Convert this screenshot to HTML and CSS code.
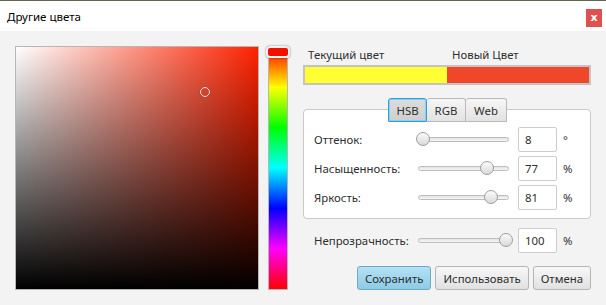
FILE: index.html
```html
<!DOCTYPE html>
<html lang="ru">
<head>
    <meta charset="UTF-8">
    <title>Другие цвета</title>
    <link rel="stylesheet" href="styles.css">
</head>
<body>
    <div class="window">
        <div class="titlebar">
            <span class="title">Другие цвета</span>
            <span class="close">x</span>
        </div>
        <div class="content">
            <div class="sv-area">
                <div class="sv-handle" style="left: 184px; top: 40px;"></div>
            </div>
            <div class="hue-bar">
                <div class="hue-handle"></div>
            </div>
            <div class="side">
                <div class="swatch-labels">
                    <span>Текущий цвет</span>
                    <span>Новый Цвет</span>
                </div>
                <div class="swatch">
                    <div class="swatch-old"></div>
                    <div class="swatch-new"></div>
                </div>
                <div class="tabs">
                    <span class="tab selected">HSB</span>
                    <span class="tab">RGB</span>
                    <span class="tab">Web</span>
                </div>
                <div class="panel">
                    <div class="row">
                        <span class="row-label">Оттенок:</span>
                        <div class="slider"><div class="track"></div><div class="thumb" style="left: -2px;"></div></div>
                        <input class="value" type="text" value="8">
                        <span class="unit">°</span>
                    </div>
                    <div class="row">
                        <span class="row-label">Насыщенность:</span>
                        <div class="slider"><div class="track"></div><div class="thumb" style="left: 62px;"></div></div>
                        <input class="value" type="text" value="77">
                        <span class="unit">%</span>
                    </div>
                    <div class="row">
                        <span class="row-label">Яркость:</span>
                        <div class="slider"><div class="track"></div><div class="thumb" style="left: 66px;"></div></div>
                        <input class="value" type="text" value="81">
                        <span class="unit">%</span>
                    </div>
                </div>
                <div class="row opacity-row">
                    <span class="row-label">Непрозрачность:</span>
                    <div class="slider"><div class="track"></div><div class="thumb" style="left: 81px;"></div></div>
                    <input class="value" type="text" value="100">
                    <span class="unit">%</span>
                </div>
                <div class="buttons">
                    <button class="btn primary">Сохранить</button>
                    <button class="btn">Использовать</button>
                    <button class="btn">Отмена</button>
                </div>
            </div>
        </div>
    </div>
</body>
</html>
```

FILE: styles.css
```css
body {
    margin: 0;
    font-family: 'Noto Sans', 'Open Sans', sans-serif;
    font-size: 11.4px;
    color: #2e2e2e;
    background-color: #f3f3f3;
}
.window {
    width: 606px;
    height: 305px;
    background-color: #f3f3f3;
}
.titlebar {
    background: white;
    border-top: 1px solid #66644e;
    display: flex;
    align-items: center;
    justify-content: space-between;
    box-sizing: border-box;
    height: 31px;
}
.title {
    margin-left: 7px;
    color: #000;
    font-size: 11.5px;
}
.close {
    width: 16px;
    height: 18px;
    margin-right: 4px;
    margin-top: 3px;
    background-color: #e05050;
    color: white;
    font-weight: bold;
    font-size: 11px;
    font-family: 'DejaVu Sans', sans-serif;
    display: flex;
    align-items: center;
    justify-content: center;
    line-height: 1;
}
.content {
    display: flex;
    padding: 15px 15px 0 15px;
}
.sv-area {
    position: relative;
    width: 244px;
    height: 244px;
    box-sizing: border-box;
    border: 1px solid #b6b6b6;
    background:
        linear-gradient(to top, #000, rgba(0, 0, 0, 0)),
        linear-gradient(to right, #fff, #ff2200);
}
.sv-handle {
    position: absolute;
    width: 8px;
    height: 8px;
    border-radius: 50%;
    border: 1.5px solid #f0e6e4;
    box-shadow: 0 0 1px rgba(0, 0, 0, 0.6);
}
.hue-bar {
    position: relative;
    width: 20px;
    height: 244px;
    margin-left: 9px;
    box-sizing: border-box;
    border: 1px solid #b6b6b6;
    background: linear-gradient(to bottom, #ff0000 0%, #ffff00 16.7%, #00ff00 33.3%, #00ffff 50%, #0000ff 66.7%, #ff00ff 83.3%, #ff0000 100%);
}
.hue-handle {
    position: absolute;
    left: -3px;
    top: -1px;
    width: 20px;
    height: 8px;
    border: 2px solid #f2f2f2;
    border-radius: 4px;
    background: #f21100;
    box-shadow: 0 0 2px rgba(0, 0, 0, 0.5);
}
.side {
    width: 288px;
    margin-left: 15px;
    display: flex;
    flex-direction: column;
}
.swatch-labels {
    display: grid;
    grid-template-columns: 1fr 1fr;
    height: 19px;
    line-height: 17px;
}
.swatch-labels span {
    padding-left: 5px;
}
.swatch {
    display: flex;
    height: 20px;
    box-sizing: border-box;
    border: 2px solid #c3c3c3;
}
.swatch-old {
    flex: 1;
    background-color: #ffff33;
}
.swatch-new {
    flex: 1;
    background-color: #f0472a;
}
.tabs {
    display: flex;
    justify-content: center;
    margin-top: 13px;
    margin-bottom: -13px;
    position: relative;
    z-index: 1;
    padding-left: 1px;
}
.tab {
    height: 24px;
    box-sizing: border-box;
    padding: 0 6px;
    width: 39px;
    display: flex;
    align-items: center;
    justify-content: center;
    border: 1px solid #b9b9b9;
    border-left: none;
    background: linear-gradient(#f6f6f6, #e2e2e2);
    border-radius: 3px 3px 0 0;
}
.tab:first-child {
    border-left: 1px solid #b9b9b9;
}
.tab:last-child {
    width: 41px;
}
.tab.selected {
    background: linear-gradient(#dcdcdc, #cfcfcf);
    border: 1px solid #2a9fd9;
    box-shadow: inset 0 0 0 1px #8fcdec;
}
.panel {
    background: white;
    border: 1px solid #cacaca;
    border-radius: 4px;
    padding: 17px 0 8px 10px;
    display: flex;
    flex-direction: column;
    gap: 4px;
}
.row {
    display: flex;
    align-items: center;
    height: 25px;
}
.row-label {
    width: 104px;
}
.slider {
    position: relative;
    width: 91px;
    height: 14px;
    margin-right: 9px;
}
.track {
    position: absolute;
    left: 0;
    right: 0;
    top: 4px;
    height: 5px;
    box-sizing: border-box;
    border: 1px solid #bdbdbd;
    border-radius: 3px;
    background: linear-gradient(#e2e2e2, #f7f7f7);
}
.thumb {
    position: absolute;
    top: -1px;
    width: 14px;
    height: 14px;
    box-sizing: border-box;
    border: 1px solid #9e9e9e;
    border-radius: 50%;
    background: linear-gradient(#fbfbfb, #d9d9d9);
}
.value {
    width: 39px;
    height: 25px;
    box-sizing: border-box;
    border: 1px solid #cdcdcd;
    border-radius: 2px;
    padding: 0 6px;
    font-family: inherit;
    font-size: 11.4px;
    color: #2e2e2e;
    background: white;
    outline: none;
}
.unit {
    margin-left: 6px;
}
.opacity-row {
    margin-top: 9px;
    padding-left: 11px;
}
.buttons {
    display: flex;
    justify-content: flex-end;
    gap: 4px;
    margin-top: 13px;
}
.btn {
    height: 24px;
    padding: 0 7px;
    font-family: inherit;
    font-size: 11.4px;
    color: #2e2e2e;
    border: 1px solid #b5b5b5;
    border-radius: 3px;
    background: linear-gradient(#f7f7f7, #e1e1e1);
}
.btn.primary {
    border-color: #6fa9c5;
    background: linear-gradient(#b4e1f5, #8dcbe5);
}
```
